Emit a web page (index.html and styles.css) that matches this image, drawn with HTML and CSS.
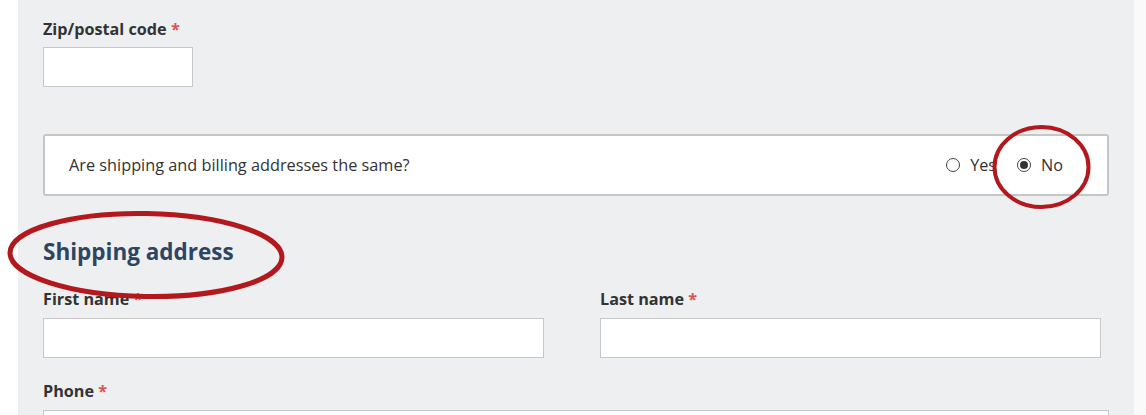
FILE: index.html
```html
<!DOCTYPE html>
<html>
<head>
<meta charset="utf-8">
<link rel="stylesheet" href="styles.css">
</head>
<body>
<div class="page">
  <div class="strip-left"></div>
  <main class="panel">
    <div class="field field-zip">
      <label class="label">Zip/postal code <span class="req">*</span></label>
      <div class="input input-zip"></div>
    </div>
    <div class="question">
      <span class="question-text">Are shipping and billing addresses the same?</span>
      <div class="radios">
        <span class="radio"><span class="dot"></span>Yes</span>
        <span class="radio checked"><span class="dot"></span>No</span>
      </div>
    </div>
    <h2 class="heading">Shipping address</h2>
    <div class="row">
      <div class="field">
        <label class="label">First name <span class="req">*</span></label>
        <div class="input"></div>
      </div>
      <div class="field">
        <label class="label">Last name <span class="req">*</span></label>
        <div class="input"></div>
      </div>
    </div>
    <div class="field field-phone">
      <label class="label">Phone <span class="req">*</span></label>
      <div class="input input-wide"></div>
    </div>
  </main>
  <div class="strip-right"></div>
</div>
<svg class="marks" width="1146" height="415" viewBox="0 0 1146 415">
  <ellipse cx="1041.5" cy="167" rx="47" ry="40" fill="none" stroke="#b3181c" stroke-width="4"/>
  <ellipse cx="146" cy="255" rx="136" ry="41.5" fill="none" stroke="#b3181c" stroke-width="5" transform="rotate(1 146 255)"/>
</svg>
</body>
</html>
```

FILE: styles.css
```css
html, body {
  margin: 0;
  padding: 0;
  background: #ffffff;
}
body {
  font-family: "Open Sans", "Liberation Sans", sans-serif;
  color: #333333;
  width: 1146px;
  height: 415px;
  overflow: hidden;
  position: relative;
}
.page {
  display: flex;
  height: 415px;
  overflow: hidden;
}
.strip-left {
  width: 18px;
  background: #ffffff;
  flex: none;
}
.strip-right {
  flex: 1;
  background: #fafafa;
}
.panel {
  width: 1066px;
  height: 396px;
  overflow: hidden;
  flex: none;
  background: #eeeff1;
  padding: 19px 25px 0 25px;
}
.label {
  display: block;
  font-weight: 700;
  font-size: 16.2px;
  line-height: 20px;
  color: #333333;
}
.req {
  color: #d9534f;
}
.input {
  background: #ffffff;
  border: 1px solid #c8c8c8;
  height: 38px;
  margin-top: 9px;
  box-sizing: content-box;
}
.input-zip {
  width: 148px;
  margin-top: 8px;
}
.question {
  margin-top: 47px;
  height: 58px;
  border: 2px solid #c6c6c6;
  border-radius: 3px;
  background: #ffffff;
  display: flex;
  align-items: center;
  justify-content: space-between;
  padding: 0 44px 0 24px;
}
.question-text {
  font-size: 16.3px;
  color: #333333;
}
.radios {
  display: flex;
  gap: 21px;
  font-size: 16.2px;
  color: #333333;
}
.radio {
  display: flex;
  align-items: center;
  gap: 10px;
}
.dot {
  width: 14px;
  height: 14px;
  border: 1px solid #444444;
  border-radius: 50%;
  box-sizing: border-box;
  display: inline-block;
  position: relative;
  background: #ffffff;
}
.checked .dot::after {
  content: "";
  position: absolute;
  left: 2px;
  top: 2px;
  width: 8px;
  height: 8px;
  border-radius: 50%;
  background: #333333;
}
.heading {
  margin: 40px 0 0 0;
  font-size: 22.5px;
  line-height: 32px;
  font-weight: 700;
  color: #2d4563;
}
.row {
  display: flex;
  gap: 56px;
  margin-top: 21px;
}
.row .field {
  width: 501px;
}
.row .input {
  width: 499px;
}
.field-phone {
  margin-top: 23px;
}
.input-wide {
  width: 1064px;
}
.marks {
  position: absolute;
  left: 0;
  top: 0;
  pointer-events: none;
}
```
